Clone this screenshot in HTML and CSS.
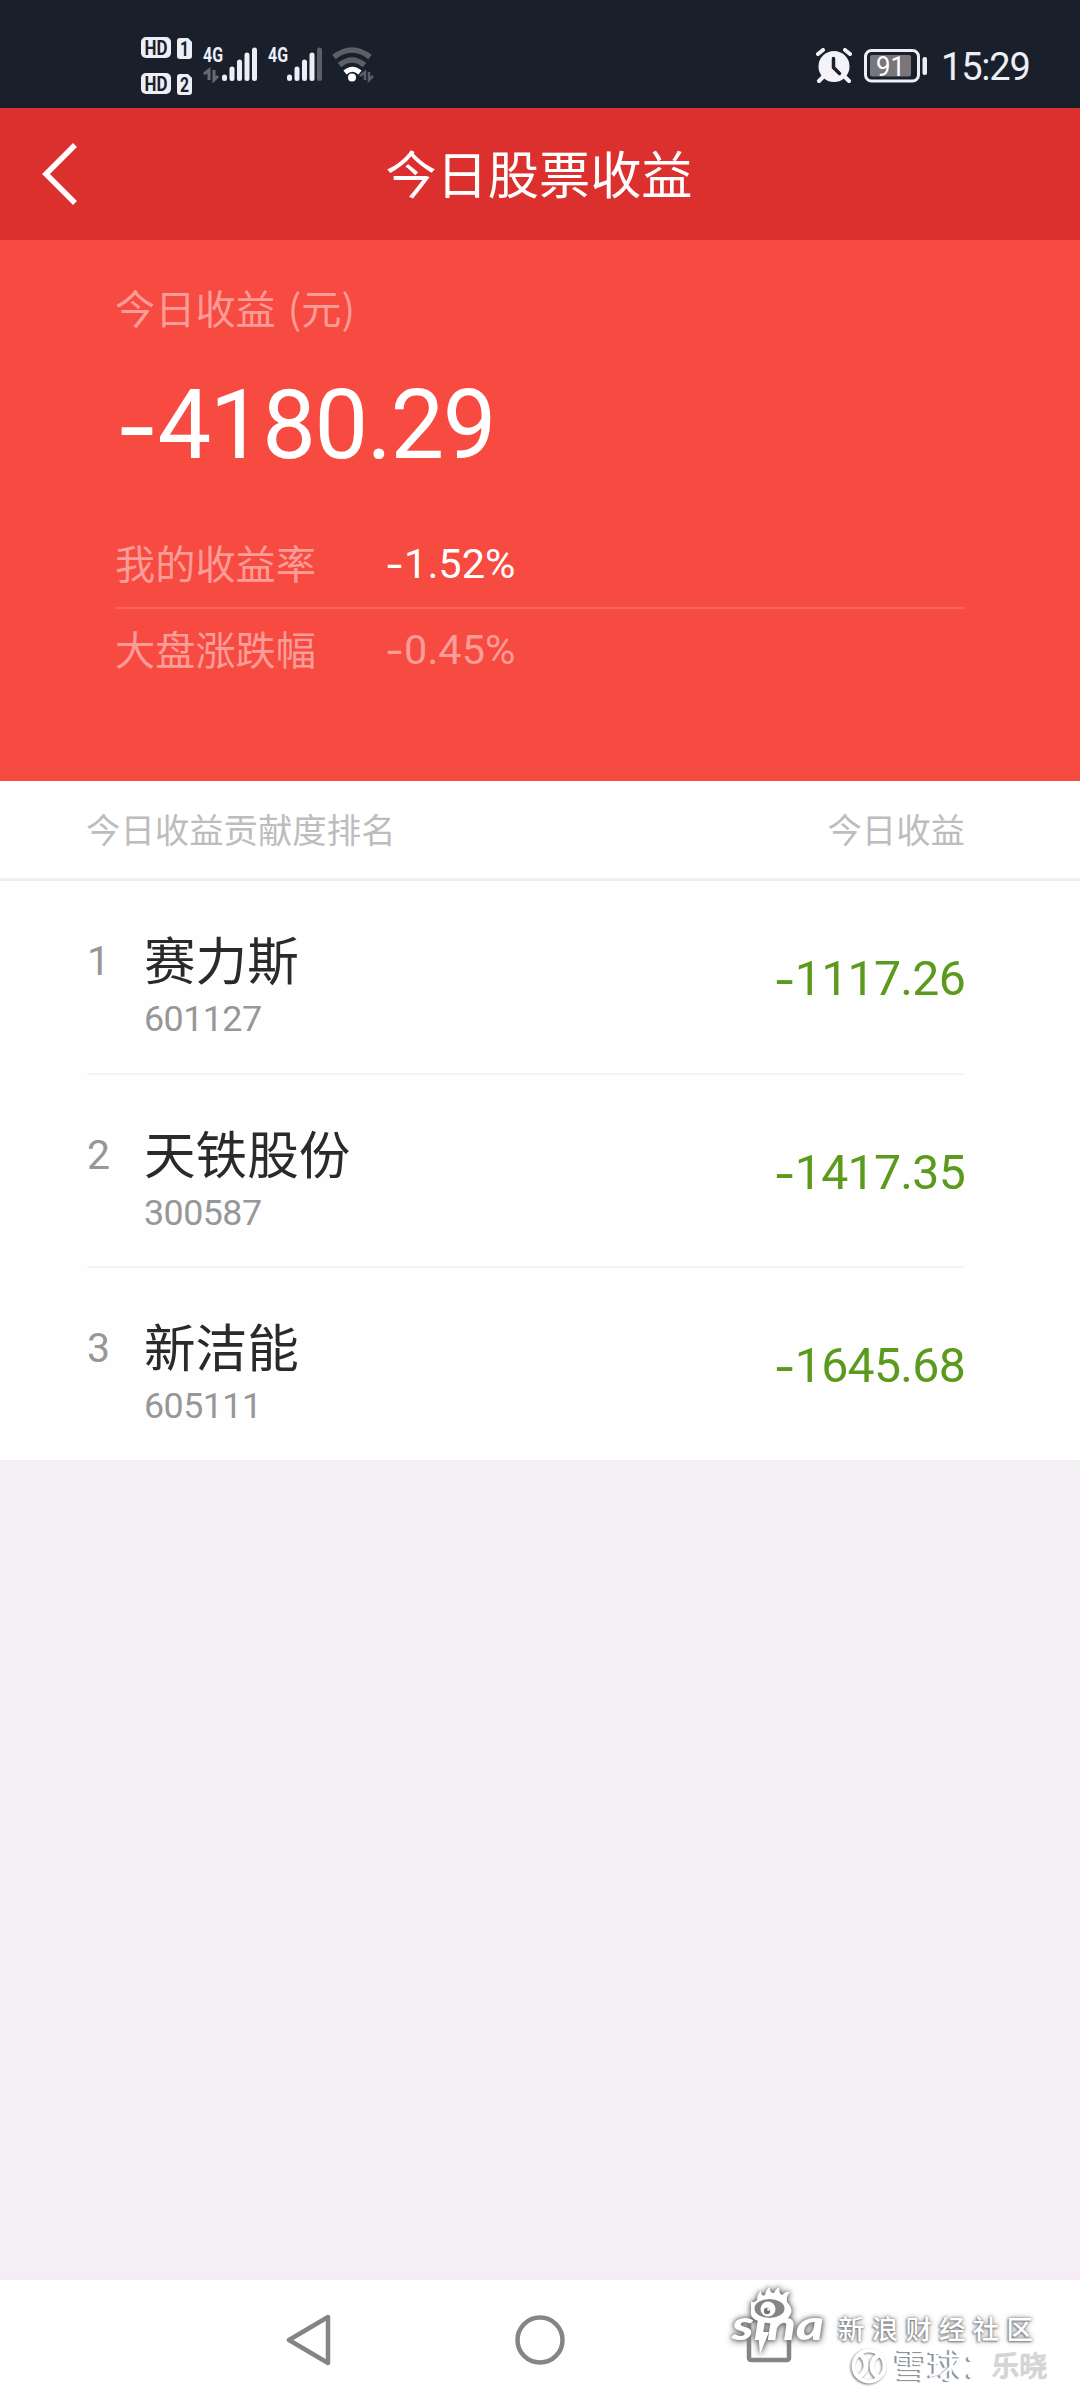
FILE: index.html
```
<!DOCTYPE html>
<html lang="zh-CN">
<head>
<meta charset="utf-8">
<title>今日股票收益</title>
<link rel="stylesheet" href="styles.css">
</head>
<body>
<div class="screen">
  <div class="status">
    <svg class="status-left" width="240" height="66" viewBox="0 0 240 66">
      <g fill="#eceef8">
        <rect x="1" y="1" width="30" height="21" rx="5"/>
        <path d="M40 2h8l4 4v14a3 3 0 0 1-3 3h-9a3 3 0 0 1-3-3V5a3 3 0 0 1 3-3z"/>
        <rect x="1" y="37" width="30" height="21" rx="5"/>
        <path d="M40 38h8l4 4v14a3 3 0 0 1-3 3h-9a3 3 0 0 1-3-3V41a3 3 0 0 1 3-3z"/>
      </g>
      <g class="badge">
        <text x="4.500" y="18.500" textLength="23" lengthAdjust="spacingAndGlyphs">HD</text>
        <text x="40" y="20" textLength="9" lengthAdjust="spacingAndGlyphs">1</text>
        <text x="4.500" y="54.500" textLength="23" lengthAdjust="spacingAndGlyphs">HD</text>
        <text x="40" y="56" textLength="9" lengthAdjust="spacingAndGlyphs">2</text>
      </g>
      <g class="net">
        <text x="63" y="26" textLength="20" lengthAdjust="spacingAndGlyphs">4G</text>
        <text x="128" y="26" textLength="20" lengthAdjust="spacingAndGlyphs">4G</text>
      </g>
      <g fill="none" stroke="#eceef8" stroke-width="5" stroke-linecap="round">
        <path d="M84.500 41v1.500M92 33v9.500M99.500 26v16.500M107 19v23.500M114.500 14v28.500"/>
        <path d="M149.500 41v1.500M157 33v9.500M164.500 26v16.500M172 19v23.500"/>
        <path d="M179.500 14v28.500" stroke="#5b6068"/>
      </g>
      <path d="M64 38l5-4v10M74 34v10l4-4" fill="none" stroke="#666b72" stroke-width="3"/>
      <g fill="none" stroke-width="5.500">
        <path d="M194 21q18-14 36 0" stroke="#5b6068"/>
        <path d="M199.500 29q12.500-10 25 0" stroke="#5b6068"/>
        <path d="M205 36.500q7.500-6.500 15 0" stroke="#fff" stroke-width="5"/>
      </g>
      <circle cx="212" cy="41.500" r="4" fill="#fff"/>
      <path d="M220 40l5-4v8M229 36v8l4-4" fill="none" stroke="#5b6068" stroke-width="2.500"/>
    </svg>
    <div class="status-right">
      <svg width="36" height="36" viewBox="0 0 36 36">
        <circle cx="18" cy="18.500" r="15.500" fill="#f3f3f8"/>
        <path d="M2 6l5-4M34 6l-5-4M7 29l-4 4M29 29l4 4" stroke="#f3f3f8" stroke-width="4" stroke-linecap="round"/>
        <path d="M17.500 10.500v9l6 6" fill="none" stroke="#1a202b" stroke-width="3.500" stroke-linecap="round"/>
      </svg>
      <svg class="battery" width="64" height="34" viewBox="0 0 64 34">
        <rect x="1.500" y="1.500" width="53" height="30.500" rx="6" fill="none" stroke="#eeeef5" stroke-width="3"/>
        <rect x="6" y="6" width="41" height="21.500" rx="2" fill="#78757d"/>
        <rect x="58.500" y="8" width="4.500" height="18" rx="2" fill="#eeeef5"/>
        <text x="12" y="26.500" textLength="29" lengthAdjust="spacingAndGlyphs">91</text>
      </svg>
      <span class="time">15:29</span>
    </div>
  </div>

  <header class="header">
    <svg class="back" width="40" height="64" viewBox="0 0 40 64"><path d="M37 3L8 32l29 29" fill="none" stroke="#fff" stroke-width="5.500"/></svg>
    <h1 class="title">今日股票收益</h1>
  </header>

  <section class="summary">
    <div class="label income">今日收益 (元)</div>
    <div class="total num"><span class="minus">-</span>4180.29</div>
    <div class="rate"><span class="label">我的收益率</span><span class="num"><span class="minus">-</span>1.52%</span></div>
    <div class="rate market"><span class="label">大盘涨跌幅</span><span class="num"><span class="minus">-</span>0.45%</span></div>
  </section>

  <div class="list-head"><span>今日收益贡献度排名</span><span>今日收益</span></div>
  <div class="list">
    <div class="item">
      <span class="rank num">1</span>
      <div class="stock"><div class="name">赛力斯</div><div class="code num">601127</div></div>
      <span class="amount num"><span class="minus">-</span>1117.26</span>
    </div>
    <div class="item">
      <span class="rank num">2</span>
      <div class="stock"><div class="name">天铁股份</div><div class="code num">300587</div></div>
      <span class="amount num"><span class="minus">-</span>1417.35</span>
    </div>
    <div class="item">
      <span class="rank num">3</span>
      <div class="stock"><div class="name">新洁能</div><div class="code num">605111</div></div>
      <span class="amount num"><span class="minus">-</span>1645.68</span>
    </div>
  </div>

  <div class="blank"></div>

  <nav class="nav">
    <svg width="50" height="56" viewBox="0 0 50 56"><path d="M3 28L42 5v46z" fill="none" stroke="#858585" stroke-width="4.500" stroke-linejoin="round"/></svg>
    <svg width="50" height="56" viewBox="0 0 50 56"><circle cx="25" cy="28" r="22.500" fill="none" stroke="#858585" stroke-width="4.500"/></svg>
    <svg width="50" height="56" viewBox="0 0 50 56"><rect x="5" y="8" width="40" height="40" rx="2" fill="none" stroke="#858585" stroke-width="4.500"/></svg>
  </nav>

  <div class="watermark">
    <svg class="sina" width="110" height="80" viewBox="0 0 110 80">
      <path d="M21 24l0-9q2 3 6-1 0-6 4-9 0 6 4 4 1-6 5-8-1 6 4 6 2-5 6-6-2 6 2 8 4-4 8-3-4 4-3 10 8 8 2 15c-8 8-28 8-36 1q-3-3-2-8z" fill="#fff"/>
      <ellipse cx="39.500" cy="22.500" rx="15" ry="9.500" fill="#858585"/>
      <circle cx="38" cy="23" r="7.500" fill="#fff"/>
      <circle cx="37" cy="25" r="3.200" fill="#777"/>
      <circle cx="38.500" cy="23.500" r="1.300" fill="#fff"/>
      <text x="2" y="54" textLength="92" lengthAdjust="spacingAndGlyphs">sına</text>
      <path d="M28 46h11l-9 22z" fill="#fff"/>
    </svg>
    <span class="community">新浪财经社区</span>
    <div class="credit">
      <svg width="38" height="38" viewBox="0 0 38 38">
        <circle cx="19" cy="19" r="15.500" fill="none" stroke="#fff" stroke-width="4"/>
        <path d="M10 7c5 4 6 8 6 12s-2 7-7 11M29 8c-6 3-7 7-7 11s2 8 6 11" fill="none" stroke="#fff" stroke-width="5"/>
      </svg>
      <span class="brand">雪球：</span><span class="author">乐晓</span>
    </div>
  </div>
</div>
</body>
</html>
```
FILE: styles.css
```
* { box-sizing: border-box; }
body { margin: 0; font-family: "Noto Sans CJK SC", sans-serif; }
svg { display: block; flex: none; }
.screen {
  position: relative;
  width: 1080px;
  height: 2400px;
  display: flex;
  flex-direction: column;
  background: #f4eff5;
  overflow: hidden;
}
.num { font-family: Roboto, sans-serif; letter-spacing: -0.015em; }
.minus { font-family: Inter, sans-serif; vertical-align: -0.035em; line-height: 0; }

.status {
  height: 108px;
  flex: none;
  display: flex;
  justify-content: space-between;
  align-items: flex-start;
  padding: 36px 49px 0 140px;
  background: #1a202b;
}
.status-right { display: flex; align-items: center; height: 54px; margin-top: 3px; color: #eeeef5; }
.battery { margin-left: 12px; }
.battery text { font: 27px Roboto, sans-serif; fill: #fff; }
.badge text { font: bold 20px Roboto, sans-serif; fill: #1a202b; }
.net text { font: bold 20px Roboto, sans-serif; fill: #eceef8; }
.time { font: 38px/54px Roboto, sans-serif; letter-spacing: -1.200px; width: 90px; margin-left: 13px; padding-top: 2px; white-space: nowrap; }

.header {
  height: 132px;
  flex: none;
  display: grid;
  grid-template-columns: 40px 1fr 40px;
  align-items: center;
  padding: 0 40px 0 38px;
  background: #dc302f;
}
.title { margin: -4px 0 0; text-align: center; font-size: 51.200px; line-height: 76px; font-weight: 400; color: #fff; }

.summary { height: 541px; flex: none; padding: 37px 115px 0; background: #f74a41; color: #fff; }
.label { font-size: 40.200px; line-height: 60px; color: #fb9c97; }
.income { word-spacing: 3px; }
.total { font-size: 95.600px; line-height: 120px; margin: 28px 0 37px; }
.rate { display: flex; height: 87px; align-items: center; border-bottom: 2px solid #f9655f; font-size: 41.500px; padding-bottom: 3px; }
.rate .num { letter-spacing: 0; }
.rate .label { width: 270px; margin-top: -3px; }
.market { height: 84px; border-bottom: 0; color: #fb9c97; }

.list-head {
  height: 100px;
  flex: none;
  display: flex;
  justify-content: space-between;
  align-items: center;
  padding: 0 115px 3px 86px;
  background: #fff;
  border-bottom: 3px solid #efefef;
  font-size: 34.400px;
  color: #bdbdbd;
}
.list { background: #fefefe; padding: 0 115px 0 87px; flex: none; }
.item { height: 193px; display: grid; grid-template-columns: 57px 1fr auto; border-bottom: 2px solid #f4f4f5; }
.item:first-child { height: 194px; }
.item:last-child { height: 192px; border-bottom: 0; }
.rank { font-size: 41px; line-height: 48px; padding-top: 56px; color: #979797; }
.name { font-size: 51.600px; line-height: 76px; padding-top: 39px; color: #2a2a2a; }
.code { font-size: 35.800px; line-height: 42px; margin-top: 2px; color: #979797; }
.amount { font-size: 48.200px; line-height: 58px; padding-top: 69px; color: #5b9a1c; }

.blank { flex: 1; border-bottom: 7px solid #f7ebf8; }
.nav { height: 120px; flex: none; display: flex; justify-content: center; align-items: center; gap: 179px; background: #fff; }

.watermark { position: absolute; left: 730px; top: 2286px; width: 340px; height: 110px; color: #fff; }
.sina { position: absolute; left: 0; top: 0; overflow: visible; filter: drop-shadow(0 0 2px #666) drop-shadow(0 1px 3px #888); }
.sina text { font: italic 900 42px Lato, sans-serif; fill: #fff; }
.community { position: absolute; left: 108px; top: 27px; font-size: 26.500px; line-height: 30px; letter-spacing: 7.200px; font-weight: 500; white-space: nowrap; text-shadow: 0 0 3px #777, -1px 1px 2px #888, 0 0 6px #aaa; }
.credit { position: absolute; left: 120px; top: 61px; display: flex; align-items: center; height: 38px; font-size: 34px; line-height: 32px; white-space: nowrap; }
.credit svg { filter: drop-shadow(-1px 1px 1px #777); }
.brand { margin: -4px 0 0 6px; width: 98px; text-shadow: -2px 1px 1px #888; }
.author { margin-top: -4px; font-size: 28px; font-weight: 500; color: #d6d6d6; text-shadow: -1px 1px 1px #ccc; }
```
